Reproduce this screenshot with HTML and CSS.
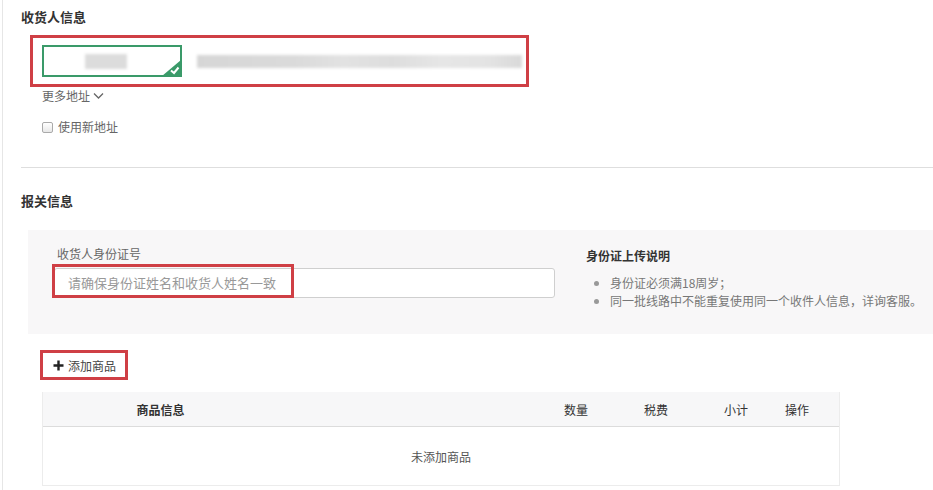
FILE: index.html
```html
<!DOCTYPE html>
<html lang="zh">
<head>
<meta charset="utf-8">
<title>收货人信息</title>
<link rel="stylesheet" href="styles.css">
</head>
<body>
<div class="page">
  <section class="consignee">
    <h2 class="sec-title">收货人信息</h2>
    <div class="mark addr-mark">
      <div class="addr-card">
        <div class="blur blur-name"></div>
        <svg class="corner" width="19" height="16" viewBox="0 0 19 16">
          <polygon points="19,0 19,16 0,16" fill="#3a9a69"/>
          <path d="M9 10.5 L12 13 L16.5 7.5" fill="none" stroke="#fff" stroke-width="2"/>
        </svg>
      </div>
      <div class="blur blur-addr"></div>
    </div>
    <div class="more">更多地址
      <svg width="11" height="8" viewBox="0 0 11 8"><path d="M1 1.5 L5.5 6 L10 1.5" fill="none" stroke="#666" stroke-width="1.3"/></svg>
    </div>
    <label class="newaddr"><span class="cb"></span>使用新地址</label>
  </section>

  <hr class="divider">

  <section class="customs">
    <h2 class="sec-title">报关信息</h2>
    <div class="panel">
      <div class="id-col">
        <div class="id-label">收货人身份证号</div>
        <div class="input-wrap">
          <div class="id-input">请确保身份证姓名和收货人姓名一致</div>
          <div class="mark input-mark"></div>
        </div>
      </div>
      <div class="note">
        <div class="note-title">身份证上传说明</div>
        <ul>
          <li>身份证必须满18周岁；</li>
          <li>同一批线路中不能重复使用同一个收件人信息，详询客服。</li>
        </ul>
      </div>
    </div>

    <div class="mark add-btn">
      <svg width="11" height="11" viewBox="0 0 11 11"><path d="M5.5 0.5 V10.5 M0.5 5.5 H10.5" stroke="#222" stroke-width="2.4"/></svg>
      <span>添加商品</span>
    </div>

    <div class="goods">
      <div class="goods-head">
        <div class="c-info">商品信息</div>
        <div></div>
        <div class="c">数量</div>
        <div class="c">税费</div>
        <div class="c">小计</div>
        <div class="c-op">操作</div>
      </div>
      <div class="goods-empty">未添加商品</div>
    </div>
  </section>
</div>
</body>
</html>
```

FILE: styles.css
```css
* { box-sizing: border-box; }
html, body { margin: 0; padding: 0; background: #fff; }
body {
  font-family: "Noto Sans CJK SC", "Noto Sans", "Liberation Sans", sans-serif;
  font-size: 12px;
  color: #333;
  overflow: hidden;
}
.page {
  margin-left: 2px;
  border-left: 1px solid #e6e6e6;
  padding-left: 18px;
  height: 490px;
}
.sec-title {
  margin: 0;
  font-size: 13px;
  font-weight: 700;
  line-height: 18px;
  color: #333;
}
.consignee { padding-top: 8px; }
.consignee .sec-title { margin-bottom: 9px; }

.mark { border: 3px solid #cf3f45; }
.addr-mark {
  margin-left: 9px;
  width: 499px;
  height: 52px;
  display: flex;
  align-items: center;
  padding-left: 9px;
  gap: 15px;
}
.addr-card {
  position: relative;
  width: 140px;
  height: 32px;
  border: 2px solid #3a9a69;
  display: flex;
  align-items: center;
  padding-left: 41px;
}
.corner { position: absolute; right: -1px; bottom: -1px; }
.blur { background: #d8d8d8; filter: blur(1.5px); }
.blur-name { width: 42px; height: 15px; background: #dcdcdc; }
.blur-addr {
  width: 325px;
  height: 13px;
  background: linear-gradient(90deg, #d6d6d6 0%, #dadada 30%, #e2e2e2 45%, #dddddd 60%, #e6e6e6 75%, #e3e3e3 90%, #d9d9d9 100%);
}
.more {
  margin: 1px 0 0 21px;
  line-height: 16px;
  color: #666;
  display: flex;
  align-items: center;
  gap: 3px;
}
.newaddr {
  margin: 15px 0 0 21px;
  display: flex;
  align-items: center;
  gap: 5px;
  line-height: 16px;
  color: #666;
}
.cb {
  width: 11px;
  height: 11px;
  border: 1px solid #aaa;
  border-radius: 2px;
  background: linear-gradient(#fff, #e8e8e8);
}
.divider {
  margin: 32px 0 0 0;
  border: 0;
  border-top: 1px solid #dedede;
}
.customs { padding-top: 24px; }
.customs .sec-title { margin-bottom: 20px; }

.panel {
  margin-left: 7px;
  background: #f8f7f8;
  height: 104px;
  display: flex;
  padding: 15px 0 0 26px;
}
.id-col { width: 532px; }
.id-label { color: #666; line-height: 18px; margin: 0 0 5px 3px; }
.input-wrap { position: relative; width: 501px; height: 30px; }
.id-input {
  height: 30px;
  background: #fff;
  border: 1px solid #cfcfcf;
  border-radius: 3px;
  color: #999;
  font-size: 13px;
  line-height: 28px;
  padding-left: 13px;
}
.input-mark {
  position: absolute;
  left: -2px;
  top: -4px;
  width: 242px;
  height: 34px;
}
.note { padding-top: 2px; }
.note-title { font-weight: 700; color: #333; line-height: 18px; }
.note ul { margin: 9px 0 0 0; padding-left: 24px; color: #777; line-height: 18px; }
.note li::marker { color: #999; }

.add-btn {
  margin: 16px 0 0 19px;
  width: 88px;
  height: 30px;
  display: flex;
  align-items: center;
  gap: 4px;
  padding-left: 10px;
  color: #444;
}
.goods {
  margin: 12px 0 0 21px;
  width: 798px;
  border: 1px solid #ececec;
  border-top: 0;
}
.goods-head {
  display: grid;
  grid-template-columns: 235px 258px 80px 80px 80px 63px;
  height: 35px;
  align-items: center;
  background: #f7f7f8;
  border-bottom: 1px solid #dcdcdc;
  color: #333;
}
.c-info { text-align: center; font-weight: 700; }
.c { text-align: center; }
.c-op { padding-left: 9px; }
.goods-empty {
  height: 58px;
  display: flex;
  align-items: center;
  justify-content: center;
  color: #555;
}
```
